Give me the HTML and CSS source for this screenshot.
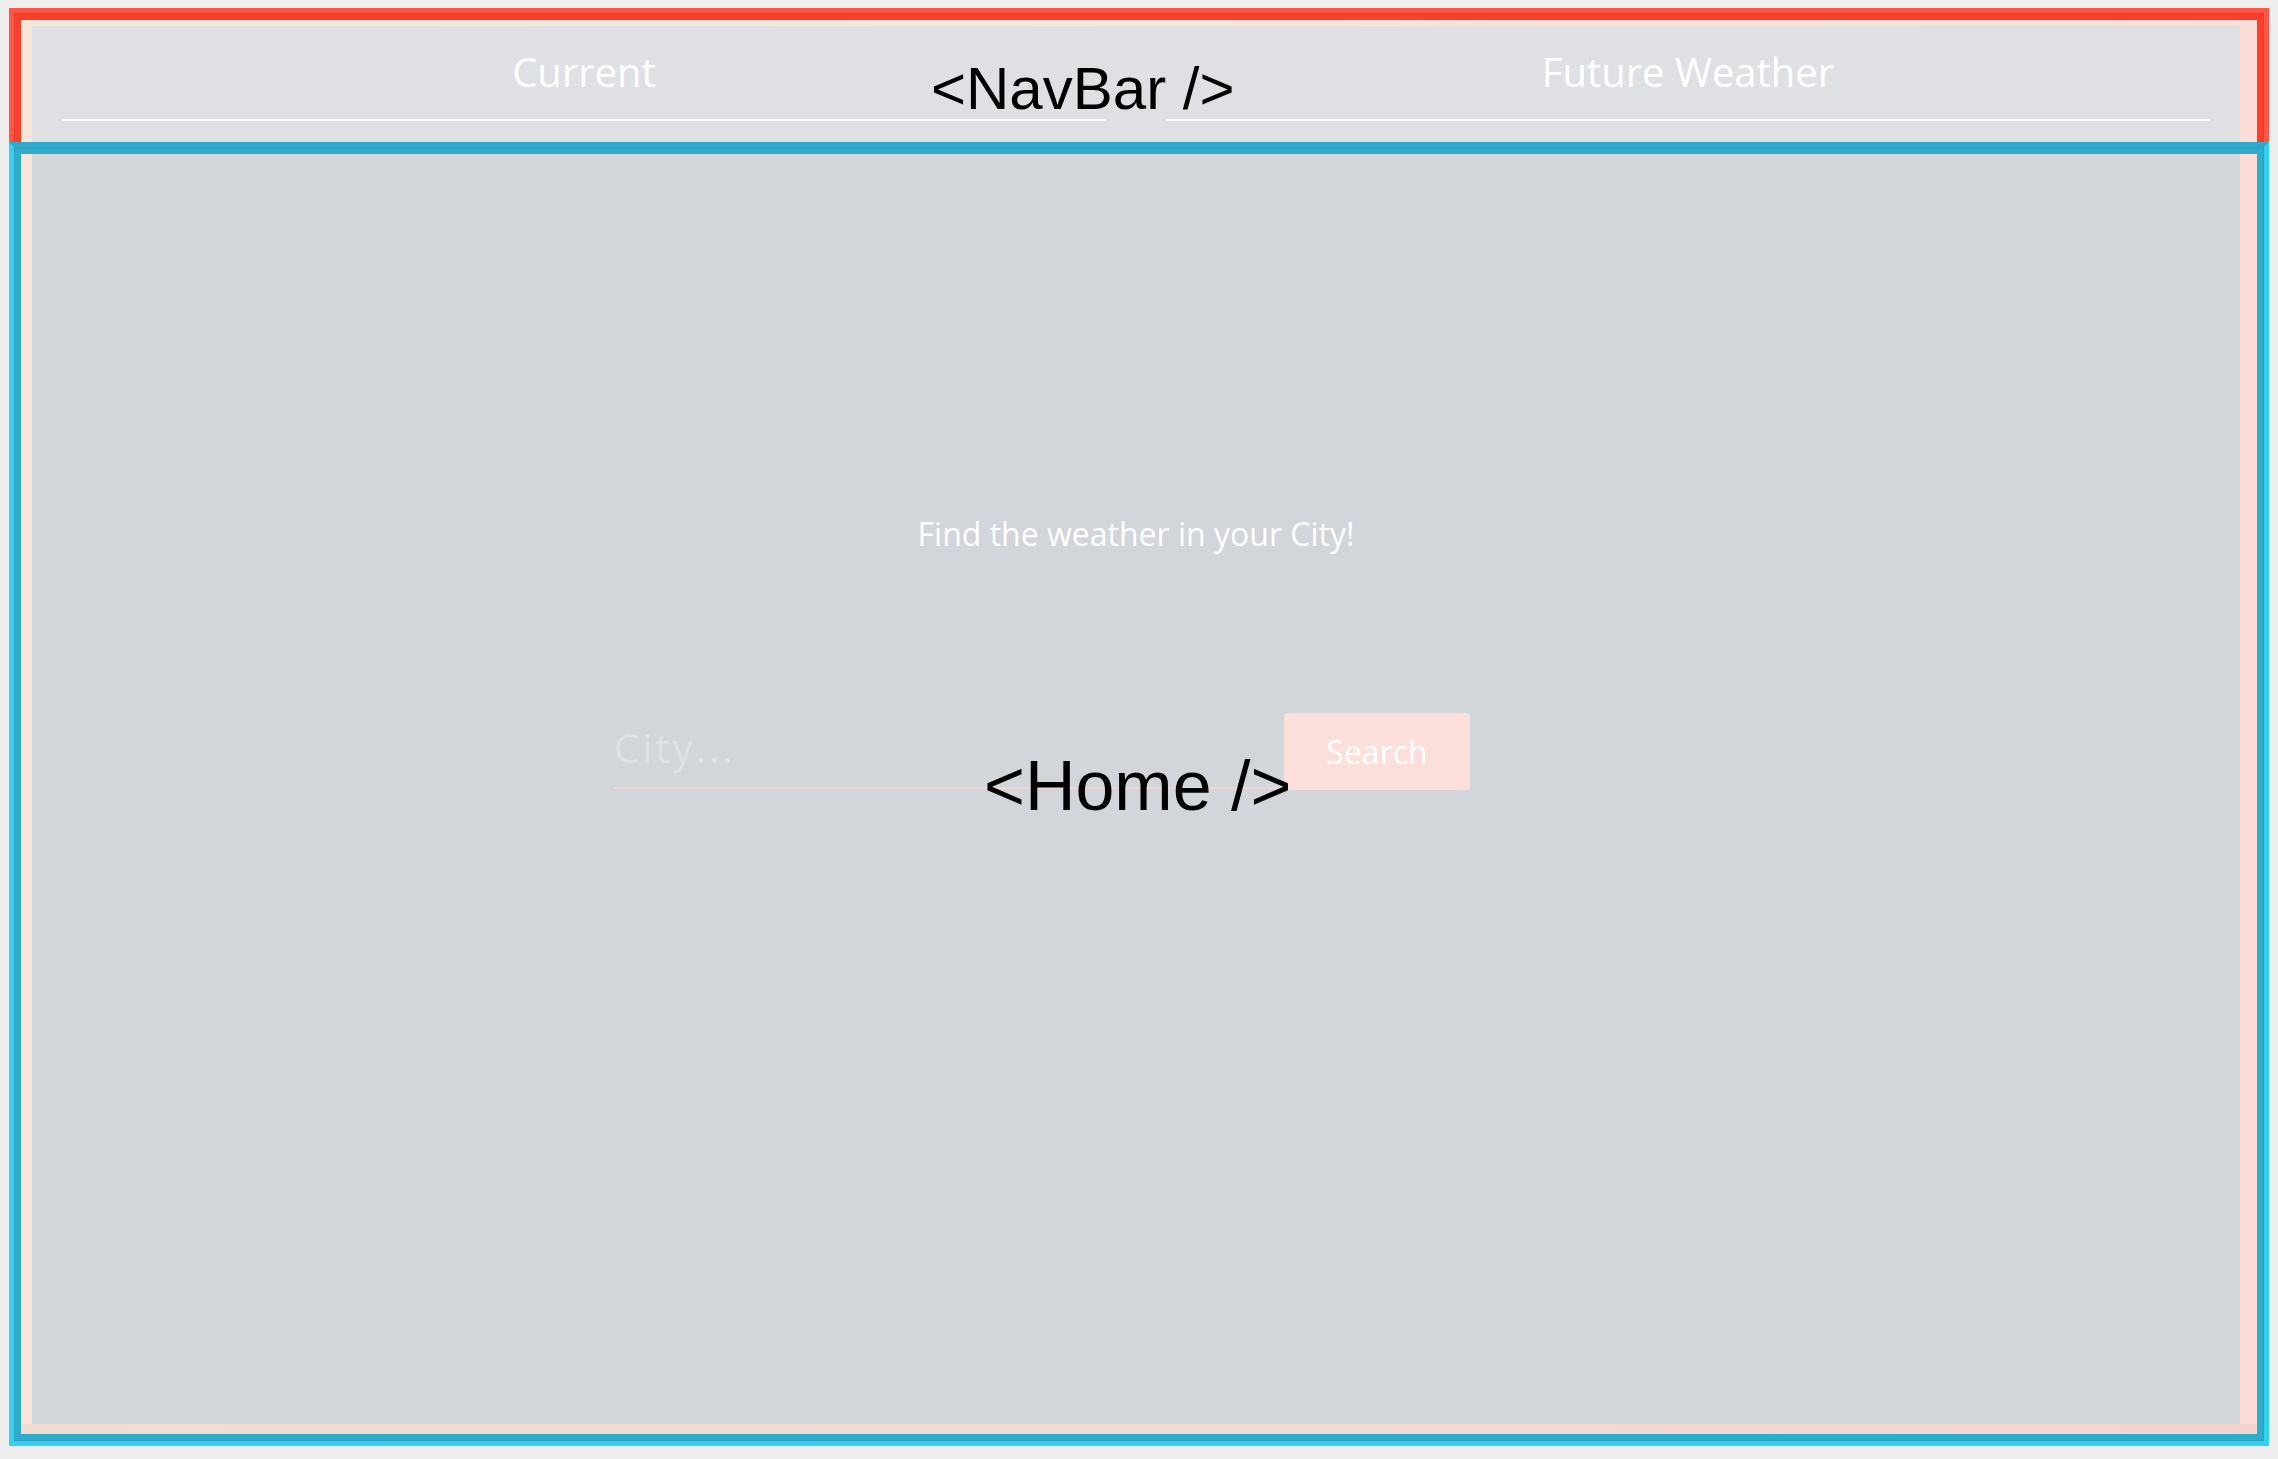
FILE: index.html
```html
<!DOCTYPE html>
<html lang="en">
<head>
<meta charset="utf-8">
<title>Weather</title>
<link rel="stylesheet" href="styles.css">
</head>
<body>
  <div class="page">
    <nav class="navbar">
      <a class="nav-link" href="#">Current</a>
      <a class="nav-link" href="#">Future Weather</a>
    </nav>
    <main class="home">
      <p class="home-title">Find the weather in your City!</p>
      <form class="search-form">
        <input class="city-input" type="text" placeholder="City...">
        <button class="search-btn" type="button">Search</button>
      </form>
    </main>
  </div>

  <div class="outline outline-nav"></div>
  <div class="outline outline-home"></div>
  <div class="comp-label label-nav">&lt;NavBar /&gt;</div>
  <div class="comp-label label-home">&lt;Home /&gt;</div>
</body>
</html>
```

FILE: styles.css
```css
html, body {
  margin: 0;
  padding: 0;
}

body {
  background: #eeeeee;
  padding: 20px 0 0 21px;
  width: 2278px;
  height: 1459px;
  box-sizing: border-box;
  overflow: hidden;
  position: relative;
  font-family: "Open Sans", "Noto Sans", sans-serif;
}

.page {
  width: 2236px;
  height: 1414px;
  box-sizing: border-box;
  padding: 6px 17px 10px 11px;
  display: flex;
  flex-direction: column;
  background:
    linear-gradient(to bottom, rgba(0,0,0,0) calc(100% - 10px), rgba(120,80,60,0.06) calc(100% - 10px)),
    linear-gradient(to right, #f9e6d9, #fbe2de 60%, #fbdcd8);
}

.navbar {
  height: 122px;
  flex: none;
  box-sizing: border-box;
  background: #dfe0e4;
  padding: 0 30px;
  display: flex;
  align-items: flex-start;
  gap: 60px;
}

.nav-link {
  flex: 1;
  text-align: center;
  color: #ffffff;
  text-decoration: none;
  font-size: 40px;
  line-height: 54px;
  padding: 19px 0 20px;
  border-bottom: 2px solid #f5f5f7;
}

.home {
  flex: 1;
  background: #d2d5da;
  padding-top: 364px;
  box-sizing: border-box;
  display: flex;
  flex-direction: column;
}

.home-title {
  margin: 0;
  text-align: center;
  color: #ffffff;
  font-size: 32px;
  line-height: 44px;
}

.search-form {
  margin: 157px 0 0 582px;
  display: flex;
  align-items: flex-start;
}

.city-input {
  width: 670px;
  height: 76px;
  box-sizing: border-box;
  padding: 0 0 6px 0;
  margin: 0;
  border: none;
  border-bottom: 2px solid #f1d4d3;
  background: transparent;
  font-family: "Open Sans", "Noto Sans", sans-serif;
  font-size: 40px;
  letter-spacing: 3px;
  color: #ffffff;
  outline: none;
}

.city-input::placeholder {
  color: #dfe1e4;
  opacity: 1;
}

.search-btn {
  width: 186px;
  height: 77px;
  margin: 0;
  padding: 0;
  border: none;
  border-radius: 4px;
  background: #fcdedb;
  color: #ffffff;
  font-family: "Open Sans", "Noto Sans", sans-serif;
  font-size: 32px;
  line-height: normal;
}

/* component highlight overlays */
.outline {
  position: absolute;
  left: 9px;
  width: 2260px;
  box-sizing: border-box;
  pointer-events: none;
}

.outline-nav {
  top: 8px;
  height: 146px;
  border: 5px solid #ff5646;
  box-shadow: inset 0 0 0 1px #e2402c, inset 0 0 0 7px #fb3f2a;
}

.outline-home {
  top: 142px;
  height: 1304px;
  border: 5px solid #33d0f4;
  border-top-color: #2fa8cc;
  box-shadow: inset 0 0 0 1px #2a9fc0, inset 0 0 0 7px #2eadcb;
}

.comp-label {
  position: absolute;
  font-family: "Liberation Sans", Arial, sans-serif;
  color: #000000;
  line-height: normal;
  white-space: nowrap;
}

.label-nav {
  left: 931px;
  top: 54px;
  font-size: 60px;
}

.label-home {
  left: 984px;
  top: 746px;
  font-size: 70px;
}
```
